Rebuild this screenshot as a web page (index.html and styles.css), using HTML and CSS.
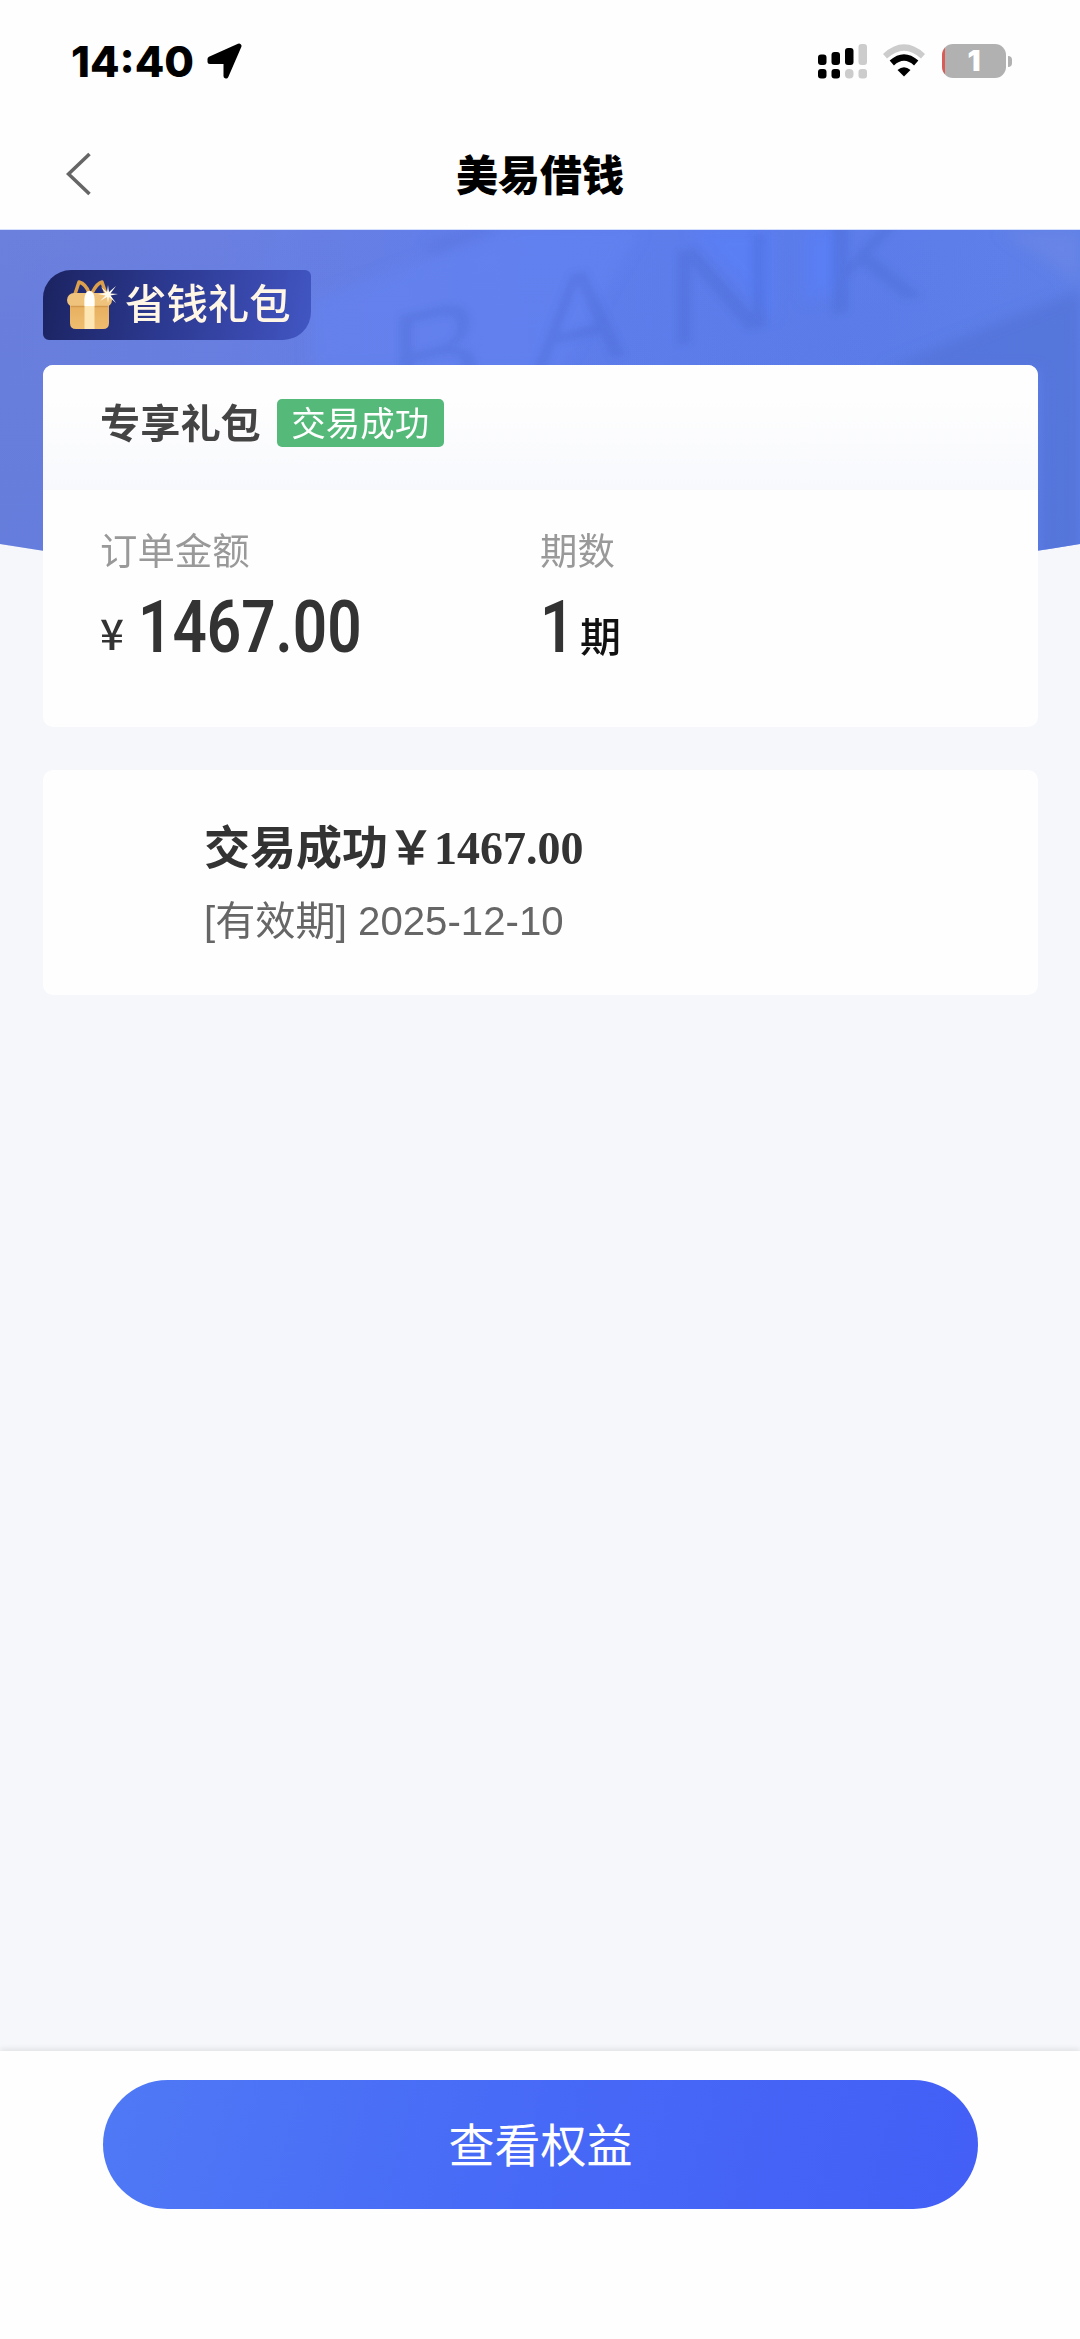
FILE: index.html
```html
<!DOCTYPE html>
<html lang="zh-CN">
<head>
<meta charset="utf-8">
<title>美易借钱</title>
<link rel="stylesheet" href="styles.css">
</head>
<body>
<div class="screen">
  <header class="top">
    <div class="status">
      <span class="time">14:40</span>
      <svg class="location" width="36" height="36" viewBox="0 0 36 36"><path d="M3 16 32 3 19 33V18.500H3Z" fill="#000" stroke="#000" stroke-width="5" stroke-linejoin="round"/></svg>
      <div class="status-icons">
        <svg width="50" height="35" viewBox="0 0 50 35">
          <g fill="#000"><rect x="0" y="10.5" width="8.5" height="10.5" rx="3"/><rect x="13.5" y="8" width="8.5" height="13" rx="3"/><rect x="27" y="4" width="8.5" height="17" rx="3"/><rect x="0" y="25" width="8.5" height="9.5" rx="3"/><rect x="13.5" y="25" width="8.5" height="9.5" rx="3"/></g>
          <g fill="#ccc"><rect x="40.5" y="0" width="8.5" height="21" rx="3"/><rect x="27" y="25" width="8.5" height="9.5" rx="4"/><rect x="40.5" y="25" width="8.5" height="9.5" rx="3"/></g>
        </svg>
        <svg class="wifi" width="42" height="34" viewBox="0 0 42 34">
          <path d="M2 12.2Q21-5.2 40 12.2" fill="none" stroke="#ccc" stroke-width="6"/>
          <path d="M8.8 19Q21 8 33.200 19" fill="none" stroke="#000" stroke-width="6.400"/>
          <path d="M14.500 26Q21 20.500 27.500 26L21 32.500Z" fill="#000"/>
        </svg>
        <div class="battery"><span>1</span></div>
      </div>
    </div>
    <div class="nav">
      <svg class="back" width="26" height="44" viewBox="0 0 26 44"><path d="M23.500 2 2.500 22 23.500 42" fill="none" stroke="#666" stroke-width="3.600"/></svg>
      <h1>美易借钱</h1>
    </div>
  </header>

  <main>
    <svg class="hero" width="1080" height="362" viewBox="0 0 1080 362">
      <defs>
        <linearGradient id="sky" x1="0" y1="0" x2="1" y2="0"><stop offset="0" stop-color="#6b7fdc"/><stop offset=".2" stop-color="#6a7fe0"/><stop offset=".5" stop-color="#5f7eed"/><stop offset=".75" stop-color="#5b7cea"/><stop offset="1" stop-color="#5f80e8"/></linearGradient>
        <linearGradient id="low" x1="0" y1="0" x2="0" y2="1"><stop offset="0" stop-color="#5577dc" stop-opacity="0"/><stop offset="1" stop-color="#5577dc" stop-opacity=".3"/></linearGradient>
        <clipPath id="arc"><path d="M0 0H1080V314Q540 404 0 314Z"/></clipPath>
        <filter id="soft" x="-20%" y="-20%" width="140%" height="140%"><feGaussianBlur stdDeviation="7"/></filter>
        <filter id="relief" x="-20%" y="-20%" width="140%" height="140%"><feGaussianBlur stdDeviation="3"/></filter>
      </defs>
      <g clip-path="url(#arc)">
        <rect width="1080" height="362" fill="url(#sky)"/>
        <rect width="1080" height="362" fill="url(#low)"/>
        <g filter="url(#soft)">
          <path d="M310 70 510 0H640L560 140H310Z" fill="#6585f5" opacity=".45"/>
          <path d="M690 0H772V90ZM805 0H838V60L805 72Z" fill="#5a80fc" opacity=".55"/>
          <path d="M880 140 1080 60V362H1040V140Z" fill="#4f6ed2" opacity=".55"/>
          <path d="M1000 0H1080V55Z" fill="#7089e6" opacity=".5"/>
          <path d="M428 20 490-2" stroke="#5168cf" stroke-width="9" opacity=".4"/>
        </g>
        <g class="mark" filter="url(#relief)">
          <text transform="matrix(1.05 -.25 0 1 388 182)">B</text>
          <text transform="matrix(1.05 -.25 0 1 530 147)">A</text>
          <text transform="matrix(1.15 -.25 0 1 665 118)">N</text>
          <text transform="matrix(1.15 -.25 0 1 820 88)">K</text>
        </g>
      </g>
    </svg>

    <div class="gift-badge">
      <svg width="54" height="54" viewBox="0 0 54 54">
        <defs><linearGradient id="gold" x1="0" y1="0" x2="0" y2="1"><stop offset="0" stop-color="#e5ad5c"/><stop offset="1" stop-color="#efbd70"/></linearGradient></defs>
        <path d="M8 16 12 4Q19 6 22 15M25 15Q30 5 35 4L39 16" fill="none" stroke="#dca04c" stroke-width="3.500" stroke-linejoin="round"/>
        <path d="M3 23H42V45Q42 51 36 51H9Q3 51 3 45Z" fill="url(#gold)"/>
        <rect x="0" y="15" width="45" height="14" rx="7" fill="#efc37c"/>
        <path d="M4 28.500H41" stroke="#d39a4d" stroke-width="1.500"/>
        <path d="M17.500 51V22Q18 13 22.500 13T27.500 22V51Z" fill="#fde6b4"/>
        <path d="M17.500 28V21Q18 13 22.500 13T27.500 21V28Z" fill="#fffefa"/>
        <path d="M41 7 42 14 49 8 43.500 15.500 51 16 43.500 17.500 49 25 42 19 41 25 40 19 33 23 38.500 17.500 31 16 38.500 15 34 9 40 14Z" fill="#fffbed"/>
      </svg>
      <span>省钱礼包</span>
    </div>

    <section class="card order">
      <div class="order-head"><h2>专享礼包</h2><span class="tag">交易成功</span></div>
      <div class="facts">
        <div class="fact">
          <div class="label">订单金额</div>
          <div class="value"><span class="yen">¥</span><span class="number">1467.00</span></div>
        </div>
        <div class="fact">
          <div class="label">期数</div>
          <div class="value"><span class="number one">1</span><span class="unit">期</span></div>
        </div>
      </div>
    </section>

    <section class="card result">
      <h3>交易成功￥1467.00</h3>
      <p>[有效期] 2025-12-10</p>
    </section>
  </main>

  <footer><button>查看权益</button></footer>
</div>
</body>
</html>
```
FILE: styles.css
```css
* { box-sizing: border-box; margin: 0; padding: 0; }
body { font-family: "Liberation Sans", "Noto Sans CJK SC", sans-serif; color: #333; background: #fefefe; }
svg { display: block; flex: none; }
.screen { width: 1080px; height: 2339px; display: flex; flex-direction: column; overflow: hidden; }
.top { height: 230px; background: #fefefe; border-bottom: 1px solid #d4e0fd; flex: none; }
.status { height: 122px; padding: 0 68px 0 71px; display: flex; align-items: center; }
.time { font: 800 43px/50px "Inter", sans-serif; color: #000; width: 136px; white-space: nowrap; }
.status-icons { margin-left: auto; display: flex; align-items: center; }
.wifi { margin: 0 17px 0 15px; }
.battery { position: relative; width: 64px; height: 34px; border-radius: 11px; background: linear-gradient(90deg, #d95c58 3px, #b1b1b1 3px); display: flex; justify-content: center; align-items: center; color: #fff; font: 900 29px/34px "Inter", sans-serif; margin-right: 6px; }
.battery::after { content: ""; position: absolute; left: 66px; top: 12px; width: 4px; height: 11px; border-radius: 0 4px 4px 0; background: #b1b1b1; }
.nav { height: 103px; display: grid; grid-template-columns: 66px 1fr 66px; align-items: center; }
.back { grid-column: 1; justify-self: end; margin-right: -26px; }
.nav h1 { grid-column: 2; font: 900 42px/60px "Noto Sans CJK SC", sans-serif; color: #000; text-align: center; padding-bottom: 2px; }

main { position: relative; flex: 1; background: #f5f7fb; padding: 40px 42px 0 43px; isolation: isolate; }
.hero { position: absolute; left: 0; top: 0; z-index: -1; }
.mark text { font: 400 136px "Liberation Sans", sans-serif; fill: #4460c4; opacity: .24; }
.gift-badge { width: 268px; height: 70px; border-radius: 28px 6px 28px 6px; background: linear-gradient(100deg, #1b2360 0%, #2c3990 45%, #3a4ab0 80%, #4257c4 100%); display: flex; align-items: center; padding-left: 24px; gap: 4px; font: 500 41.400px/60px "Noto Sans CJK SC", sans-serif; color: #fff6e6; }
.gift-badge span { margin-top: -8px; white-space: nowrap; }
.card { background: #fefefe; border-radius: 10px; }
.order { height: 362px; margin-top: 25px; }
.order-head { height: 125px; padding: 0 0 9px 57px; display: flex; align-items: center; gap: 16px; border-radius: 10px 10px 0 0; background: linear-gradient(#fefefe 25%, #f8f9fd); }
.order-head h2 { font: 700 40.200px/56px "Noto Sans CJK SC", sans-serif; color: #444; padding-bottom: 4px; }
.tag { width: 167px; height: 48px; border-radius: 5px; background: #55b97a; color: #fff; font: 400 34.500px/44px "Noto Sans CJK SC", sans-serif; text-align: center; }
.facts { display: grid; grid-template-columns: 440px 1fr; padding: 31px 0 0 57px; }
.label { font: 400 37.400px/56px "Noto Sans CJK SC", sans-serif; color: #999; }
.value { display: flex; align-items: baseline; height: 90px; line-height: 90px; padding-top: 5px; }
.yen { width: 38px; font: 500 42px/90px "Noto Sans CJK SC", sans-serif; transform: translateY(-2px); }
.number { font: 600 73px/90px "Roboto", sans-serif; transform: scaleX(.825); transform-origin: left; }
.one { width: 40px; }
.unit { font: 500 41px/90px "Noto Sans CJK SC", sans-serif; color: #111; }
.result { height: 225px; margin-top: 43px; padding: 46px 0 0 161px; }
.result h3 { font: 700 46px/66px "Liberation Serif", "Noto Sans CJK SC", serif; color: #333; }
.result p { font: 400 40.200px/60px "Liberation Sans", "Noto Sans CJK SC", sans-serif; color: #666; margin-top: 10px; }
footer { position: relative; height: 288px; background: #fefefe; padding: 29px 102px 0 103px; box-shadow: 0 -2px 6px rgba(0, 0, 0, .09); flex: none; }
button { display: block; width: 875px; height: 129px; border: 0; border-radius: 65px; padding-bottom: 6px; background: linear-gradient(105deg, #4f79f5, #4769f7 50%, #435ff6); color: #fff; font: 400 46px/120px "Noto Sans CJK SC", sans-serif; }
```
